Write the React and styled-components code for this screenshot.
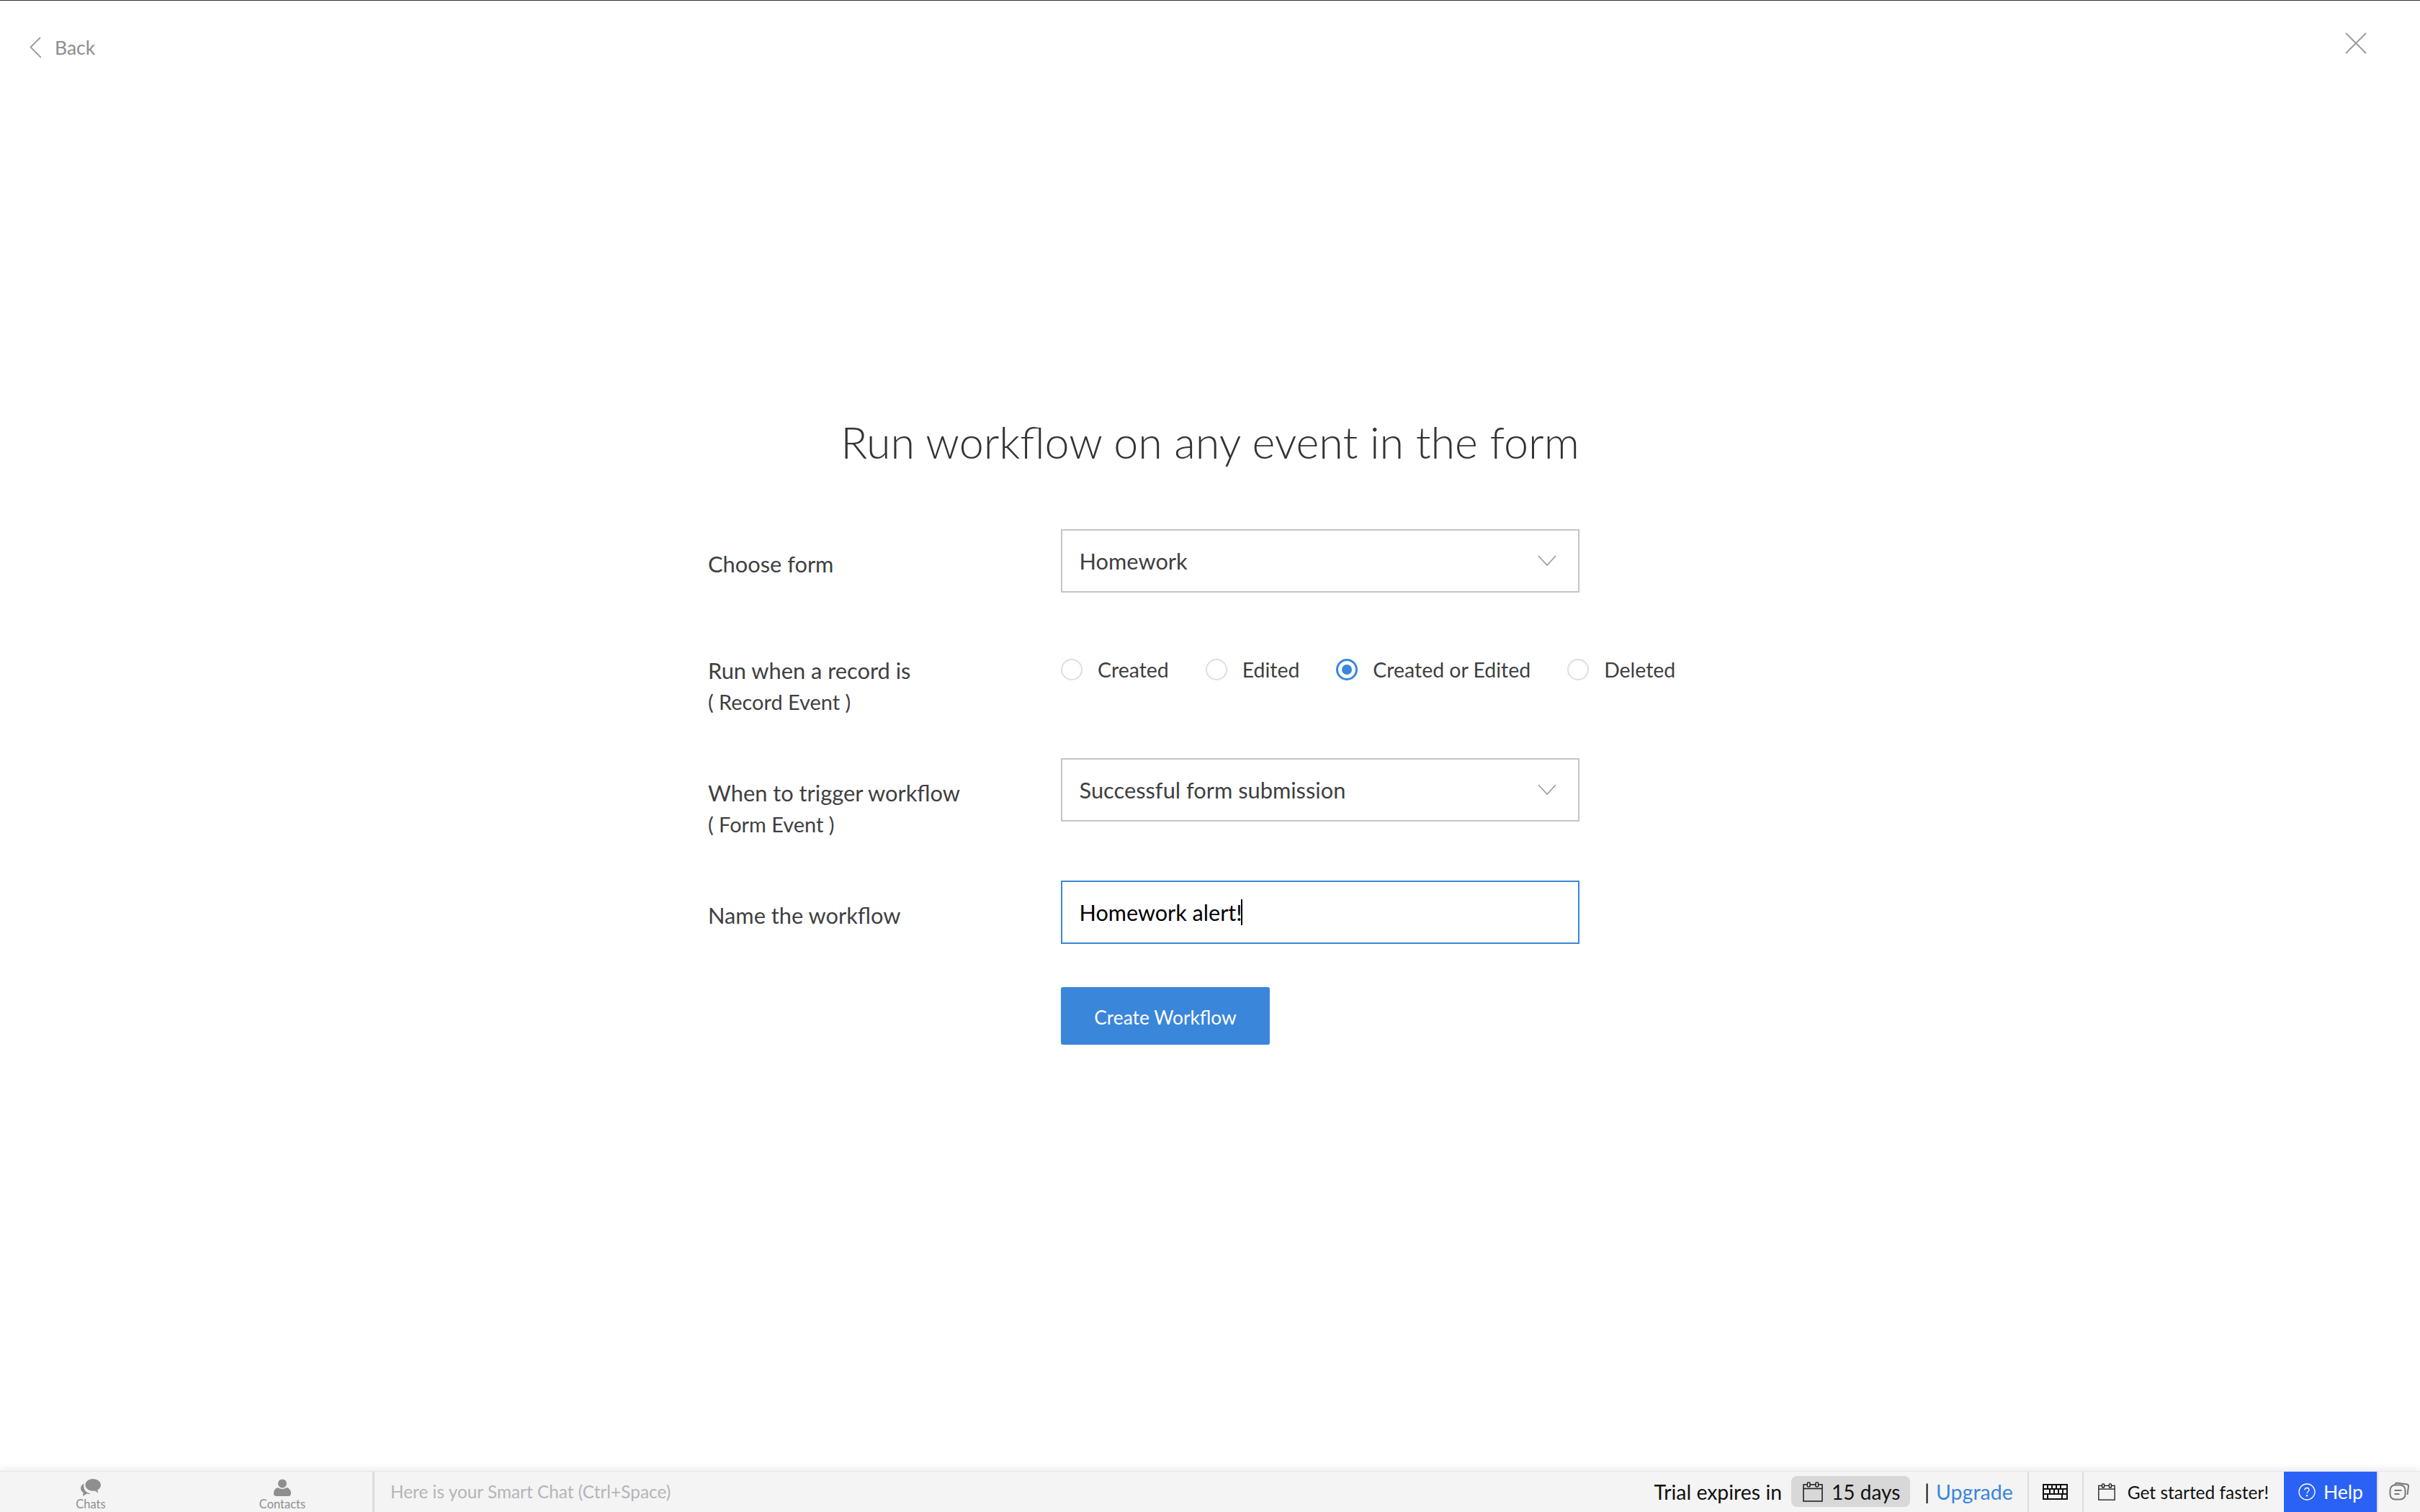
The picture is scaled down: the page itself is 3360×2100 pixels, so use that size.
import React from 'react';
import styled, { createGlobalStyle } from 'styled-components';

const Global = createGlobalStyle`
  html, body { margin: 0; padding: 0; background: #fff; }
  body { font-family: Lato, "Noto Sans", sans-serif; }
  * { box-sizing: border-box; }
`;

const Page = styled.div`
  width: 3360px;
  height: 2100px;
  display: flex;
  flex-direction: column;
  border-top: 1px solid #333;
  overflow: hidden;
  background: #fff;
`;

const TopBar = styled.header`
  height: 130px;
  flex: none;
  display: flex;
  justify-content: space-between;
  align-items: flex-start;
  padding: 44px 74px 0 41px;
`;

const BackLink = styled.a`
  display: flex;
  align-items: center;
  gap: 19px;
  color: #8e8e8e;
  font-size: 26.5px;
  line-height: 42px;
  svg { display: block; }
`;

const CloseBtn = styled.button`
  border: 0;
  padding: 0;
  background: none;
  display: block;
  svg { display: block; }
`;

const Main = styled.main`
  flex: 1;
  width: 1394px;
  margin: 0 auto;
  display: flex;
  flex-direction: column;
`;

const Title = styled.h1`
  margin: 438px 0 0;
  font-weight: 300;
  font-size: 61px;
  line-height: 90px;
  color: #333;
  text-align: center;
`;

const Row = styled.div`
  display: grid;
  grid-template-columns: 490px 1fr;
  margin-top: ${p => p.$top}px;
  height: ${p => p.$height}px;
`;

const Label = styled.div`
  font-size: 30.8px;
  line-height: 43px;
  color: #3f3f3f;
  margin-top: ${p => p.$pad}px;
`;

const SubLabel = styled.div`
  font-size: 28.9px;
  line-height: 43px;
`;

const SelectBox = styled.div`
  width: 720px;
  height: 88px;
  border: 2px solid #c2c5cb;
  display: flex;
  align-items: center;
  justify-content: space-between;
  padding: 0 30px 0 23.500px;
  font-size: 30.8px;
  color: #3f3f3f;
`;

const TextBox = styled(SelectBox)`
  border-color: #3a86db;
  justify-content: flex-start;
  font-size: 30.6px;
  color: #000;
`;

const Caret = styled.span`
  display: inline-block;
  width: 2px;
  height: 36px;
  background: #000;
  margin-left: -1px;
`;

const RadioGroup = styled.div`
  display: flex;
  align-items: center;
  gap: 51px;
  height: 30px;
`;

const RadioItem = styled.label`
  display: flex;
  align-items: center;
  gap: 21px;
  font-size: 28.45px;
  color: #3f3f3f;
`;

const RadioMark = styled.span`
  width: 30px;
  height: 30px;
  border-radius: 50%;
  border: ${p => (p.$on ? '3px solid #3a86db' : '2px solid #dedede')};
  display: flex;
  align-items: center;
  justify-content: center;
  flex: none;
  &::after {
    content: '';
    display: ${p => (p.$on ? 'block' : 'none')};
    width: 14px;
    height: 14px;
    border-radius: 50%;
    background: #3a86db;
  }
`;

const PrimaryButton = styled.button`
  width: 290px;
  height: 80px;
  border: 0;
  border-radius: 3px;
  background: #3a86db;
  color: #fff;
  font-family: inherit;
  font-size: 26.3px;
  padding: 3px 0 0;
`;

const BottomBar = styled.footer`
  height: 57px;
  flex: none;
  display: flex;
  align-items: stretch;
  background: #f4f4f4;
  box-shadow: 0 -3px 10px rgba(0, 0, 0, 0.08);
  border-top: 1px solid #e6e6e6;
  position: relative;
`;

const Tabs = styled.nav`
  width: 520px;
  flex: none;
  display: flex;
  padding-left: 76px;
  gap: 166px;
  border-right: 3px solid #dcdcdc;
`;

const Tab = styled.div`
  width: 100px;
  flex: none;
  display: flex;
  flex-direction: column;
  align-items: center;
  padding-top: 10px;
  color: #8f8f8f;
  font-size: 16.500px;
  line-height: 18px;
  svg { display: block; margin-bottom: 2px; }
`;

const SmartChat = styled.div`
  flex: 1;
  padding-left: 22px;
  font-size: 24.4px;
  line-height: 55px;
  color: #b3b5b9;
`;

const RightGroup = styled.div`
  display: flex;
  align-items: center;
  color: #111;
  font-size: 28px;
`;

const TrialText = styled.span`
  font-size: 28.4px;
  margin-right: 13px;
`;

const DaysChip = styled.span`
  width: 165px;
  height: 43px;
  margin-top: -1px;
  background: #d8d8d8;
  border-radius: 8px;
  display: flex;
  align-items: center;
  padding-left: 16px;
  gap: 12px;
`;

const Pipe = styled.span`
  margin-left: 20px;
  margin-right: 9px;
`;

const UpgradeLink = styled.a`
  color: #3a86db;
  font-size: 28.5px;
  margin-right: 20px;
`;

const Segment = styled.div`
  height: 100%;
  display: flex;
  align-items: center;
  border-left: 2px solid #dcdcdc;
  padding: ${p => p.$pad};
  gap: ${p => p.$gap || 0}px;
  font-size: ${p => p.$size || 26}px;
`;

const HelpButton = styled.button`
  width: 129px;
  height: 100%;
  border: 0;
  padding: 0 0 0 20px;
  display: flex;
  align-items: center;
  gap: 11px;
  background: #2a62f6;
  color: #fff;
  font-family: inherit;
  font-size: 26.5px;
`;

const Calendar = ({ w, h }) => (
  <svg width={w} height={h} viewBox="0 0 28 28" fill="none" stroke="#222" strokeWidth="1.6">
    <rect x="1" y="4" width="26" height="23" />
    <path d="M1 9.500h26" />
    <rect x="6.500" y="1" width="3.500" height="6" rx="1" fill="#f4f4f4" />
    <rect x="18" y="1" width="3.500" height="6" rx="1" fill="#f4f4f4" />
  </svg>
);

const Chevron = () => (
  <svg width="26" height="16" viewBox="0 0 26 16" fill="none" stroke="#9a9a9a" strokeWidth="1.6">
    <path d="M1 1 13 14 25 1" />
  </svg>
);

export default function App() {
  return (
    <Page>
      <Global />
      <TopBar>
        <BackLink>
          <svg width="16" height="30" viewBox="0 0 16 30" fill="none" stroke="#9a9a9a" strokeWidth="1.8">
            <path d="M15 1 1.500 14.500 16 29" />
          </svg>
          Back
        </BackLink>
        <CloseBtn aria-label="Close">
          <svg width="30" height="30" viewBox="0 0 30 30" fill="none" stroke="#9c9c9c" strokeWidth="2">
            <path d="M1 1 29 29M29 1 1 29" />
          </svg>
        </CloseBtn>
      </TopBar>
      <Main>
        <Title>Run workflow on any event in the form</Title>
        <Row $top={76} $height={88}>
          <Label $pad={27}>Choose form</Label>
          <SelectBox>
            Homework
            <Chevron />
          </SelectBox>
        </Row>
        <Row $top={92} $height={30}>
          <Label $pad={-5}>
            Run when a record is
            <SubLabel>( Record Event )</SubLabel>
          </Label>
          <RadioGroup>
            <RadioItem><RadioMark />Created</RadioItem>
            <RadioItem><RadioMark />Edited</RadioItem>
            <RadioItem><RadioMark $on />Created or Edited</RadioItem>
            <RadioItem><RadioMark />Deleted</RadioItem>
          </RadioGroup>
        </Row>
        <Row $top={108} $height={88}>
          <Label $pad={27}>
            When to trigger workflow
            <SubLabel>( Form Event )</SubLabel>
          </Label>
          <SelectBox>
            Successful form submission
            <Chevron />
          </SelectBox>
        </Row>
        <Row $top={82} $height={88}>
          <Label $pad={27}>Name the workflow</Label>
          <TextBox>Homework alert!<Caret /></TextBox>
        </Row>
        <Row $top={60} $height={80}>
          <span />
          <PrimaryButton>Create Workflow</PrimaryButton>
        </Row>
      </Main>
      <BottomBar>
        <Tabs>
          <Tab>
            <svg width="28" height="24" viewBox="0 0 28 24" fill="#8f8f8f">
              <path d="M17 0c6 0 11 3.600 11 8.500 0 3-1.900 5.500-4.600 7l.8 4-4.600-3c-.9.1-1.700.2-2.600.2-6 0-10.500-3.700-10.500-8.200C6.500 3.600 11 0 17 0Z" />
              <path d="M4.500 6.500C1.800 8 0 10.400 0 13c0 2.500 1.500 4.700 3.700 6.200L3 24l5.600-3.400c1.900.4 4 .4 5.800-.2-5.800-.4-11.500-5-9.900-13.900Z" />
            </svg>
            Chats
          </Tab>
          <Tab>
            <svg width="24" height="24" viewBox="0 0 24 24" fill="#8f8f8f">
              <circle cx="12" cy="6.500" r="6" />
              <path d="M0 20c0-4 2-7 6-8 3 2.500 9 2.500 12 0 4 1 6 4 6 8 0 2.500-1 4-4 4H4c-3 0-4-1.500-4-4Z" />
            </svg>
            Contacts
          </Tab>
        </Tabs>
        <SmartChat>Here is your Smart Chat (Ctrl+Space)</SmartChat>
        <RightGroup>
          <TrialText>Trial expires in</TrialText>
          <DaysChip>
            <Calendar w={28} h={28} />
            15 days
          </DaysChip>
          <Pipe>|</Pipe>
          <UpgradeLink>Upgrade</UpgradeLink>
          <Segment $pad="0 20px 0 19px">
            <svg width="35" height="22" viewBox="0 0 35 22" fill="#111">
              <path fillRule="evenodd" d="M0 0h35v22H0ZM2 2v4h4V2Zm6 0v4h4V2Zm6 0v4h4V2Zm6 0v4h4V2Zm6 0v4h7V2ZM2 8v5h7V8Zm9 0v5h4V8Zm6 0v5h4V8Zm6 0v5h4V8Zm6 0v5h4V8ZM2 15v5h4v-5Zm6 0v5h18v-5Zm20 0v5h5v-5Z" />
            </svg>
          </Segment>
          <Segment $pad="0 21px 0 20px" $gap={17} $size={24.5}>
            <Calendar w={24} h={26} />
            Get started faster!
          </Segment>
          <HelpButton>
            <svg width="24" height="24" viewBox="0 0 24 24" fill="none" stroke="#fff" strokeWidth="1.3">
              <circle cx="12" cy="12" r="11" />
              <path d="M9 9.500C9 7.500 10.400 6.500 12 6.500s3 1 3 2.800c0 2.200-3 2.500-3 5" />
              <circle cx="12" cy="17.300" r=".6" fill="#fff" />
            </svg>
            Help
          </HelpButton>
          <Segment $pad="0 15px 0 15px">
            <svg width="28" height="28" viewBox="0 0 28 28" fill="none" stroke="#777" strokeWidth="2">
              <path d="M8 4 10 1.500 25 3.500c1.300.2 2 1.100 2 2.500l-1.500 12" />
              <rect x="1.500" y="4.500" width="21" height="20" rx="7" fill="#f4f4f4" />
              <path d="M7.500 12h10M7.500 17h7" />
            </svg>
          </Segment>
        </RightGroup>
      </BottomBar>
    </Page>
  );
}
